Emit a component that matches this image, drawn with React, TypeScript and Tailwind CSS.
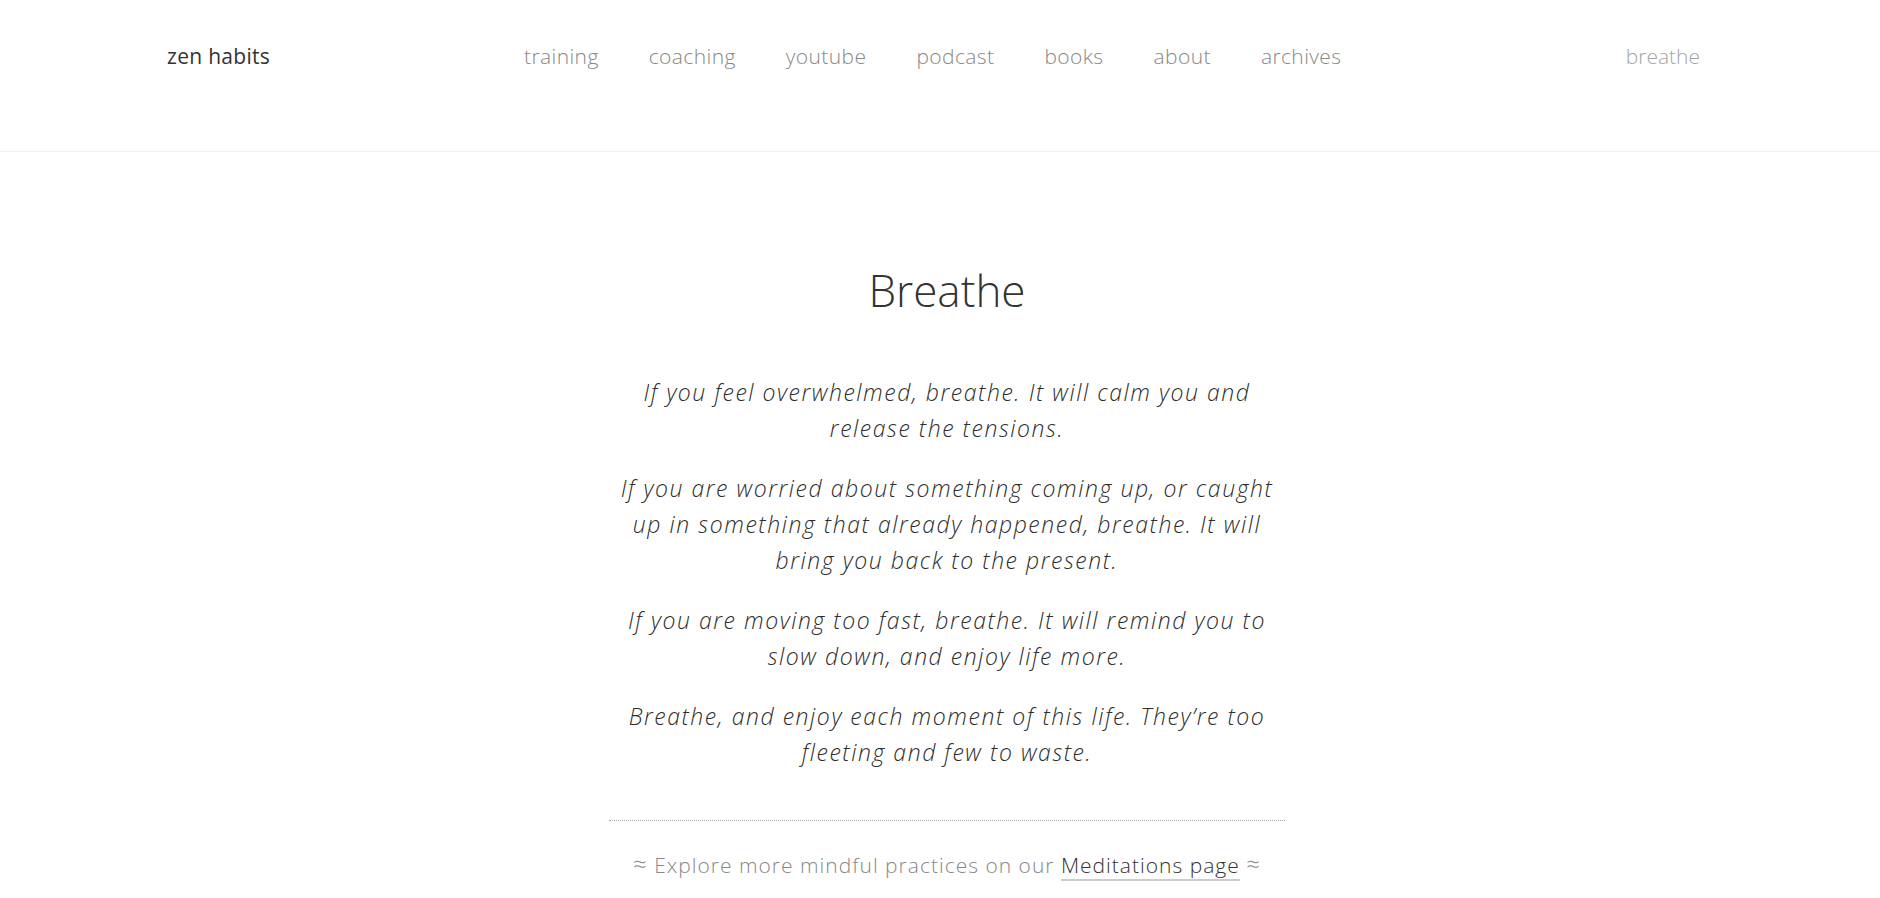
const nav = ['training', 'coaching', 'youtube', 'podcast', 'books', 'about', 'archives'];

const paragraphs = [
  'If you feel overwhelmed, breathe. It will calm you and release the tensions.',
  'If you are worried about something coming up, or caught up in something that already happened, breathe. It will bring you back to the present.',
  'If you are moving too fast, breathe. It will remind you to slow down, and enjoy life more.',
  'Breathe, and enjoy each moment of this life. They\u2019re too fleeting and few to waste.',
];

export default function App() {
  return (
    <div className="min-h-screen bg-white font-['Open_Sans',sans-serif] text-[#333]">
      <header className="h-[152px] border-b border-[#f2f2f2] pl-[167px] pr-[180px] pt-[42px]">
        <div className="flex items-center h-[30px]">
          <a className="w-[357px] text-[21px] tracking-[0.3px] text-[#333]">zen habits</a>
          <nav className="flex gap-[50px] text-[21px] font-light tracking-[0.4px] text-[#888]">
            {nav.map((n) => (
              <a key={n}>{n}</a>
            ))}
          </nav>
          <a className="ml-auto text-[21px] font-light text-[#a5a5a5]">breathe</a>
        </div>
      </header>

      <main className="flex justify-center pl-[14px]">
        <div className="w-[676px] flex flex-col items-center pt-[108px]">
          <h1 className="text-[44px] font-light leading-[60px] text-[#333]">Breathe</h1>
          <div className="mt-[54px] flex flex-col gap-[24px] text-center">
            {paragraphs.map((p, i) => (
              <p key={i} className="text-[23px] font-light italic leading-[36px] tracking-[1.55px] text-[#2e2e2e]">
                {p}
              </p>
            ))}
          </div>
          <div className="mt-[50px] w-full border-t border-dotted border-[#aaa]" />
          <p className="mt-[25px] text-[21px] font-light tracking-[1px] text-[#888]">
            <span className="text-[24px]">≈</span> Explore more mindful practices on our{' '}
            <a className="text-[#333] border-b-2 border-[#ccc]">Meditations page</a>{' '}
            <span className="text-[24px]">≈</span>
          </p>
        </div>
      </main>
    </div>
  );
}
